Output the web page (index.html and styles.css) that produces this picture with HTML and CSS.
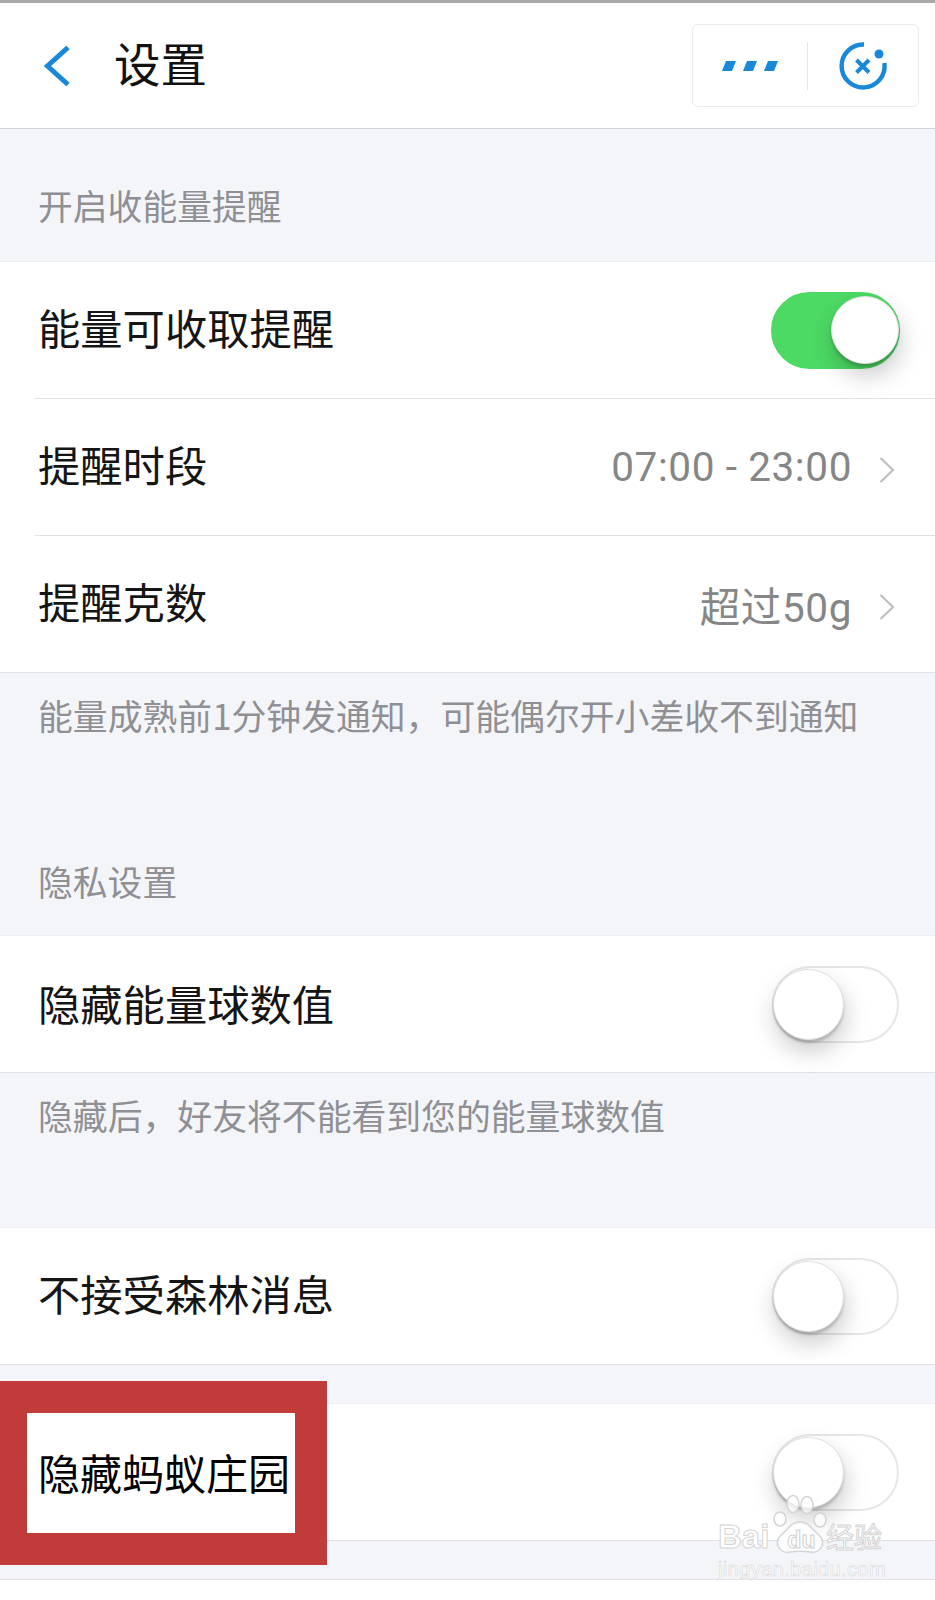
FILE: index.html
```html
<!DOCTYPE html>
<html lang="zh-CN">
<head>
    <meta charset="UTF-8">
    <meta name="viewport" content="width=device-width, initial-scale=1.0">
    <title>设置</title>
    <link rel="stylesheet" href="styles.css">
</head>
<body>
    <!-- Header -->
    <header class="nav">
        <svg class="back" width="26" height="40" viewBox="0 0 26 40"><path d="M24 1.5 L3.5 20 L24 38.5" fill="none" stroke="#1a88d8" stroke-width="5"/></svg>
        <h1 class="nav-title">设置</h1>
        <div class="capsule">
            <div class="capsule-cell">
                <svg width="56" height="10" viewBox="0 0 56 10"><path d="M4 0h10l-4 10H0zM25 0h10l-4 10H21zM46 0h10l-4 10H42z" fill="#1a88d8"/></svg>
            </div>
            <div class="capsule-cell capsule-close">
                <svg width="50" height="50" viewBox="0 0 50 50">
                    <path d="M26 3.5 A21.5 21.5 0 1 0 46.4 22" fill="none" stroke="#1a88d8" stroke-width="4.4"/>
                    <circle cx="41" cy="13" r="4.5" fill="#1a88d8"/>
                    <path d="M18.5 19 L31 31.5 M31 19 L18.5 31.5" fill="none" stroke="#1a88d8" stroke-width="4"/>
                </svg>
            </div>
        </div>
    </header>

    <main>
        <h2 class="section-title first">开启收能量提醒</h2>
        <section class="group">
            <div class="row">
                <span class="row-label">能量可收取提醒</span>
                <div class="switch on"><div class="knob"></div></div>
            </div>
            <div class="row">
                <span class="row-label">提醒时段</span>
                <span class="row-value">07:00 - 23:00</span>
                <svg class="chevron" width="16" height="26" viewBox="0 0 16 26"><path d="M1.5 1 L14 13 L1.5 25" fill="none" stroke="#bcbcbc" stroke-width="2"/></svg>
            </div>
            <div class="row">
                <span class="row-label">提醒克数</span>
                <span class="row-value">超过50g</span>
                <svg class="chevron" width="16" height="26" viewBox="0 0 16 26"><path d="M1.5 1 L14 13 L1.5 25" fill="none" stroke="#bcbcbc" stroke-width="2"/></svg>
            </div>
        </section>
        <p class="note note-energy">能量成熟前1分钟发通知，可能偶尔开小差收不到通知</p>

        <h2 class="section-title">隐私设置</h2>
        <section class="group">
            <div class="row">
                <span class="row-label row-label-hide">隐藏能量球数值</span>
                <div class="switch"><div class="knob"></div></div>
            </div>
        </section>
        <p class="note note-hide">隐藏后，好友将不能看到您的能量球数值</p>

        <section class="group">
            <div class="row">
                <span class="row-label">不接受森林消息</span>
                <div class="switch"><div class="knob"></div></div>
            </div>
        </section>
        <div class="spacer"></div>
        <section class="group">
            <div class="row">
                <span class="row-label row-label-marked">隐藏蚂蚁庄园</span>
                <div class="switch"><div class="knob"></div></div>
            </div>
        </section>
        <div class="spacer spacer-last"></div>
    </main>

    <!-- Red marker over the last row -->
    <div class="marker"></div>

    <!-- Watermark -->
    <div class="watermark">
        <svg class="paw" width="62" height="66" viewBox="0 0 62 66">
            <g fill="#fff" fill-opacity="0.75" stroke="#d4d4d4" stroke-width="1.5">
                <ellipse cx="23" cy="14" rx="6" ry="8.5"/>
                <ellipse cx="37" cy="15" rx="6" ry="8.5"/>
                <ellipse cx="10" cy="29" rx="6" ry="7"/>
                <ellipse cx="50" cy="30" rx="6" ry="7"/>
                <path d="M30 32 C22 32 19 38 11 45 C3 53 10 64 20 62 C26 61 34 61 40 62 C50 64 57 53 49 45 C41 38 38 32 30 32 Z"/>
            </g>
        </svg>
        <div class="wm-line">
            <span class="wm-bai">Bai</span>
            <span class="wm-du">du</span>
            <span class="wm-jy">经验</span>
        </div>
        <div class="wm-url">jingyan.baidu.com</div>
    </div>
</body>
</html>
```

FILE: styles.css
```css
/* Global Styles */
html, body {
    height: 1600px;
    overflow: hidden;
}

body {
    margin: 0;
    padding: 0;
    position: relative;
    background-color: #fff;
    color: #151515;
    font-family: "Noto Sans CJK SC", "Noto Sans", sans-serif;
}

/* Header */
.nav {
    display: flex;
    align-items: center;
    box-sizing: border-box;
    height: 129px;
    padding: 0 16px 0 44px;
    background-color: #fff;
    border-top: 3px solid #a9a9a9;
    border-bottom: 1px solid #d3d3dc;
}

.nav-title {
    margin: 0 0 0 44px;
    padding-bottom: 8px;
    font-size: 46.5px;
    font-weight: 400;
    line-height: 60px;
    color: #111;
}

.capsule {
    display: flex;
    align-items: center;
    box-sizing: border-box;
    width: 227px;
    height: 83px;
    margin-left: auto;
    border: 1px solid #ececf0;
    border-radius: 6px;
}

.capsule-cell {
    display: flex;
    align-items: center;
    justify-content: center;
    width: 115px;
    height: 48px;
}

.capsule-close {
    width: 110px;
    border-left: 1px solid #e4e4e8;
}

/* Sections */
main {
    background-color: #f3f5f9;
}

.section-title {
    display: flex;
    align-items: flex-end;
    box-sizing: border-box;
    height: 156px;
    margin: 0;
    padding: 0 0 32px 38px;
    font-size: 34.8px;
    font-weight: 400;
    line-height: 44px;
    color: #8f8f94;
}

.section-title.first {
    height: 132px;
    padding-bottom: 34px;
}

.group {
    background-color: #fff;
    border-top: 1px solid #eceef2;
    border-bottom: 1px solid #dfe1e6;
}

.row {
    display: flex;
    align-items: center;
    height: 136px;
    margin-left: 35px;
    padding-right: 36px;
    padding-left: 3px;
    border-bottom: 1px solid #e3e3e6;
}

.row:last-child {
    border-bottom: none;
}

.row-label {
    padding-bottom: 7px;
    font-size: 42.3px;
    line-height: 56px;
}

.row-label-hide {
    padding-bottom: 2px;
}

.row-label-marked {
    padding-bottom: 0;
    font-size: 42px;
    color: #000;
}

.row-value {
    margin-left: auto;
    font-family: Roboto, "Noto Sans CJK SC", sans-serif;
    font-size: 40.5px;
    letter-spacing: 0.6px;
    color: #868686;
}

.chevron {
    margin-top: 5px;
    margin-left: 27px;
    margin-right: 4px;
}

/* Switches */
.switch {
    display: flex;
    align-items: center;
    box-sizing: border-box;
    width: 127px;
    height: 77px;
    margin-left: auto;
    margin-top: 1px;
    padding: 0 2px;
    border: 2px solid #e6e6e6;
    border-radius: 39px;
    background-color: #fff;
}

.switch.on {
    justify-content: flex-end;
    width: 129px;
    margin-right: -1px;
    margin-top: 0;
    border-color: #4cd964;
    background-color: #4cd964;
    padding: 0;
}

.knob {
    box-sizing: border-box;
    width: 71px;
    height: 71px;
    margin-left: -3px;
    border: 1px solid #e0e0e0;
    border-radius: 50%;
    background-color: #fff;
    box-shadow: 0 3px 3px rgba(0, 0, 0, 0.18), 2px 12px 24px rgba(0, 0, 0, 0.2);
}

.switch.on .knob {
    width: 68px;
    height: 68px;
    margin: 0 -1px 0 0;
}

/* Notes */
.note {
    margin: 0;
    padding-left: 38px;
    font-size: 34.85px;
    line-height: 44px;
    color: #8f8f94;
}

.note-energy {
    height: 86px;
    padding-top: 20px;
}

.note-hide {
    height: 134px;
    padding-top: 20px;
}

.spacer {
    height: 38px;
}

.spacer-last {
    border-bottom: 1px solid #dfe1e6;
}

/* Overlays */
.marker {
    position: absolute;
    left: 0;
    top: 1381px;
    box-sizing: border-box;
    width: 327px;
    height: 184px;
    border-style: solid;
    border-color: #c23b3b;
    border-width: 32px 32px 32px 27px;
}

.watermark {
    position: absolute;
    left: 716px;
    top: 1490px;
    width: 170px;
    height: 90px;
    color: #fff;
}

.paw {
    position: absolute;
    left: 54px;
    top: 0;
}

.wm-line {
    position: absolute;
    left: 2px;
    top: 28px;
    display: flex;
    align-items: baseline;
    width: 170px;
    height: 36px;
    font-family: "Liberation Sans", sans-serif;
    line-height: 36px;
}

.wm-bai {
    font-size: 33px;
    font-weight: 700;
    -webkit-text-stroke: 1px #d4d4d4;
}

.wm-du {
    margin-left: 18px;
    font-size: 23px;
    font-weight: 700;
    color: #fff;
    -webkit-text-stroke: 1px #d0d0d0;
}

.wm-jy {
    margin-left: auto;
    margin-right: 6px;
    font-family: "Noto Sans CJK SC", sans-serif;
    font-size: 28px;
    -webkit-text-stroke: 1px #d4d4d4;
}

.wm-url {
    position: absolute;
    left: 2px;
    top: 67px;
    font-family: "Liberation Sans", sans-serif;
    font-size: 20px;
    line-height: 24px;
    letter-spacing: 0.4px;
    color: #fff;
    -webkit-text-stroke: 0.6px #d8d8d8;
}
```
